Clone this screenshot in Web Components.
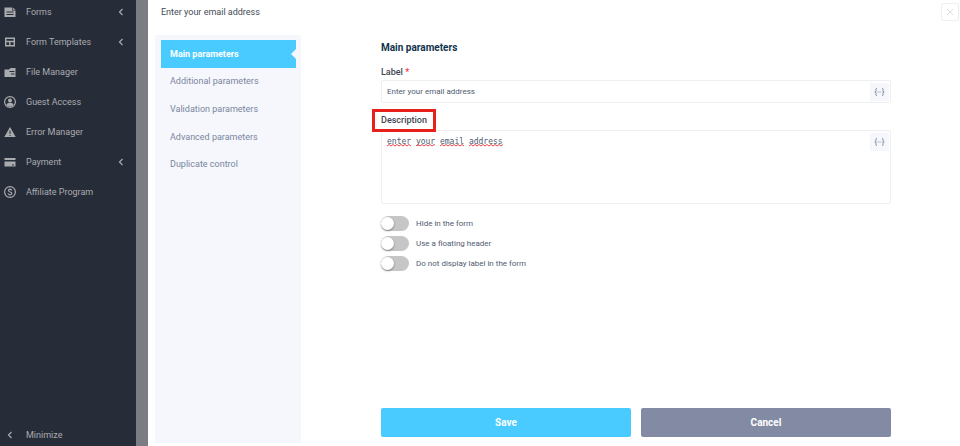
<!DOCTYPE html>
<html lang="en">
<head>
<meta charset="utf-8">
<meta name="viewport" content="width=device-width, initial-scale=1">
<title>Enter your email address</title>
<style>
    html, body{
        height: 100%;
        margin: 0;
    }
    body{
        font-family: Roboto, "Liberation Sans", sans-serif;
        font-size: 9px;
        background: white;
    }
</style>
</head>
<body>
<app-shell>
    <side-nav slot="nav">
        <nav-item icon="forms" more>Forms</nav-item>
        <nav-item icon="templates" more>Form Templates</nav-item>
        <nav-item icon="files">File Manager</nav-item>
        <nav-item icon="guest">Guest Access</nav-item>
        <nav-item icon="error">Error Manager</nav-item>
        <nav-item icon="payment" more>Payment</nav-item>
        <nav-item icon="affiliate">Affiliate Program</nav-item>
        <nav-item slot="bottom" icon="back">Minimize</nav-item>
    </side-nav>
    <settings-panel>
        <span slot="title">Enter your email address</span>
        <tab-list slot="tabs">
            <tab-item active>Main parameters</tab-item>
            <tab-item>Additional parameters</tab-item>
            <tab-item>Validation parameters</tab-item>
            <tab-item>Advanced parameters</tab-item>
            <tab-item>Duplicate control</tab-item>
        </tab-list>
        <span slot="heading">Main parameters</span>
        <text-field label="Label" value="Enter your email address" required></text-field>
        <text-field label="Description" value="enter your email address" multiline marked></text-field>
        <toggle-group>
            <toggle-switch>Hide in the form</toggle-switch>
            <toggle-switch>Use a floating header</toggle-switch>
            <toggle-switch>Do not display label in the form</toggle-switch>
        </toggle-group>
        <action-button slot="actions">Save</action-button>
        <action-button slot="actions" kind="secondary">Cancel</action-button>
    </settings-panel>
</app-shell>

<script>
const icons = {
    forms: `<path fill="currentColor" fill-rule="evenodd" d="M.5 1.500h7.500v3h3.500v6.500H.5zM2.500 5.500v1h7v-1zM2.500 8v1h7V8z"/><path fill="currentColor" d="M8.700 1.500l2.800 2.300H8.700z"/>`,
    templates: `<path fill="none" stroke="currentColor" stroke-width="1.400" d="M1.700 2.200h8.600v7.600H1.700zM1.700 5.500h8.600M5.800 5.500v4.300"/>`,
    files: `<path fill="currentColor" fill-rule="evenodd" d="M.5 3.500h4.500L6.500 2h5v9H.5zM5.500 5v1h5V5zM7 7.500v1h3.500v-1z"/>`,
    guest: `<circle cx="6" cy="6" r="5.400" fill="none" stroke="currentColor" stroke-width="1.200"/><circle cx="6" cy="4.500" r="2" fill="currentColor"/><path fill="currentColor" d="M2.400 9c.5-3 6.700-3 7.200 0C7.700 11.200 4.300 11.200 2.400 9z"/>`,
    error: `<path fill="currentColor" fill-rule="evenodd" d="M6 1l5.700 10H.3zM5.500 4.500v3.500h1V4.500zM5.500 9v1h1V9z"/>`,
    payment: `<path fill="currentColor" fill-rule="evenodd" d="M.5 2h11v2H.5zM.5 5.500h11V10.500H.5zM8 8.500v1h2v-1z"/>`,
    affiliate: `<circle cx="6" cy="6" r="5.400" fill="none" stroke="currentColor" stroke-width="1.200"/><path fill="none" stroke="currentColor" stroke-width="1.100" d="M7.900 4.500C7.500 3 4.300 3 4.300 4.600c0 1.700 3.600 1 3.600 2.800 0 1.700-3.500 1.700-3.900 0M6 2.300v1.300M6 8.500v1.300"/>`,
    back: `<path fill="none" stroke="currentColor" stroke-width="1.200" d="M7.500 3L4.500 6l3 3"/>`
}
const svg = (name) => `<svg width="12" height="12" viewBox="0 0 12 12" aria-hidden="true">${icons[name]}</svg>`

customElements.define("app-shell", class extends HTMLElement{
    constructor(){
        super()
        this.attachShadow({mode: "open"}).innerHTML = `
            <style>
            :host{
                display: flex;
                min-height: 100%;
                background: #7c7d82;
            }
            slot[name=nav]::slotted(*){
                flex: 0 0 136px;
                margin-right: 12px;
            }
            ::slotted(settings-panel){
                flex: 1;
                min-width: 0;
            }
            </style>
            <slot name="nav"></slot>
            <slot></slot>
            `
    }
})

customElements.define("side-nav", class extends HTMLElement{
    constructor(){
        super()
        this.attachShadow({mode: "open"}).innerHTML = `
            <style>
            :host{
                display: block;
                background: #272c39;
                color: #aaabae;
            }
            nav{
                display: flex;
                flex-direction: column;
                justify-content: space-between;
                height: 100%;
            }
            </style>
            <nav aria-label="Main menu">
                <div><slot></slot></div>
                <div><slot name="bottom"></slot></div>
            </nav>
            `
    }
})

customElements.define("nav-item", class extends HTMLElement{
    constructor(){
        super()
        const more = this.hasAttribute("more") ? `<span class="more">${svg("back")}</span>` : ""
        this.attachShadow({mode: "open"}).innerHTML = `
            <style>
            :host{
                display: block;
            }
            a{
                display: flex;
                align-items: center;
                gap: 10px;
                box-sizing: border-box;
                height: 30px;
                padding: 0 9px 7px 4px;
                color: inherit;
                text-decoration: none;
            }
            :host([slot=bottom]) a{
                height: 22px;
                padding-bottom: 0;
            }
            svg{
                display: block;
            }
            .text{
                flex: 1;
                white-space: nowrap;
            }
            </style>
            <a href="#">${svg(this.getAttribute("icon"))}<span class="text"><slot></slot></span>${more}</a>
            `
    }
})

customElements.define("settings-panel", class extends HTMLElement{
    constructor(){
        super()
        this.attachShadow({mode: "open"}).innerHTML = `
            <style>
            :host{
                display: flex;
                flex-direction: column;
                box-sizing: border-box;
                background: white;
                color: #4a5160;
            }
            header{
                display: flex;
                justify-content: space-between;
                align-items: center;
                height: 24px;
                padding: 0 1px 0 13px;
            }
            h1{
                margin: 0;
                font-size: 9px;
                font-weight: 400;
                color: #444a55;
            }
            .close{
                display: grid;
                place-items: center;
                width: 18px;
                height: 18px;
                padding: 0;
                border: 1px solid #f0f0f2;
                border-radius: 2px;
                background: white;
                color: #dcdddf;
            }
            .body{
                display: flex;
                flex: 1;
                padding: 11px 0 3px 7px;
            }
            slot[name=tabs]::slotted(*){
                flex: 0 0 146px;
            }
            .main{
                display: flex;
                flex: 1;
                flex-direction: column;
                min-width: 0;
                padding: 6px 69px 6px 80px;
            }
            h2{
                margin: 0 0 10px;
                font-size: 10px;
                line-height: 14px;
                font-weight: 700;
                color: #10344d;
            }
            .actions{
                display: grid;
                grid-template-columns: 1fr 1fr;
                gap: 10px;
                margin-top: auto;
            }
            </style>
            <header>
                <h1><slot name="title"></slot></h1>
                <button class="close" type="button" aria-label="Close">
                    <svg width="8" height="8" viewBox="0 0 8 8"><path d="M1 1l6 6M7 1L1 7" stroke="currentColor" fill="none"/></svg>
                </button>
            </header>
            <div class="body">
                <slot name="tabs"></slot>
                <div class="main">
                    <h2><slot name="heading"></slot></h2>
                    <slot></slot>
                    <div class="actions"><slot name="actions"></slot></div>
                </div>
            </div>
            `
    }
})

customElements.define("tab-list", class extends HTMLElement{
    constructor(){
        super()
        this.attachShadow({mode: "open"}).innerHTML = `
            <style>
            :host{
                display: block;
                box-sizing: border-box;
                padding: 5px 5px 5px 6px;
                border-radius: 2px;
                background: #f5f7fc;
            }
            .list{
                display: grid;
                grid-auto-rows: 1fr;
                height: 138px;
            }
            </style>
            <div class="list" role="tablist"><slot></slot></div>
            `
    }
})

customElements.define("tab-item", class extends HTMLElement{
    constructor(){
        super()
        this.attachShadow({mode: "open"}).innerHTML = `
            <style>
            :host{
                display: block;
            }
            button{
                position: relative;
                width: 100%;
                height: 100%;
                padding: 0 9px;
                border: 0;
                background: none;
                color: #7a869d;
                font: inherit;
                text-align: left;
            }
            :host([active]) button{
                background: #49cbff;
                color: white;
                font-weight: 700;
            }
            :host([active]) button::after{
                content: "";
                position: absolute;
                right: 0;
                top: calc(50% - 5px);
                border: 5px solid transparent;
                border-left: 0;
                border-right-color: #f5f7fc;
            }
            </style>
            <button type="button" role="tab" aria-selected="${this.hasAttribute("active")}"><slot></slot></button>
            `
    }
})

customElements.define("text-field", class extends HTMLElement{
    constructor(){
        super()
        const label = this.getAttribute("label")
        const value = this.getAttribute("value")
        const multiline = this.hasAttribute("multiline")
        const star = this.hasAttribute("required") ? ` <span class="star">*</span>` : ""
        const control = multiline
            ? `<textarea id="control" spellcheck="false">${value}</textarea><div class="squiggles">${this.squiggles(value)}</div>`
            : `<input id="control" type="text" value="${value}">`
        this.attachShadow({mode: "open"}).innerHTML = `
            <style>
            :host{
                display: block;
            }
            :host([marked]){
                margin-top: 6px;
            }
            .label{
                display: flex;
                height: 15px;
            }
            :host([marked]) .label{
                height: 21px;
            }
            label{
                line-height: 15px;
                font-weight: 500;
                color: #3f4650;
            }
            .star{
                color: #f33;
            }
            :host([marked]) label{
                position: relative;
                z-index: 1;
                box-sizing: border-box;
                height: 23px;
                margin-left: -9px;
                padding: 1px 6px;
                border: 3px solid #e8201b;
                background: white;
            }
            .box{
                position: relative;
                display: flex;
                align-items: flex-start;
                box-sizing: border-box;
                padding: 2px 1px 1px 5px;
                border: 1px solid #eeeff3;
                border-radius: 2px;
            }
            input, textarea{
                flex: 1;
                min-width: 0;
                box-sizing: border-box;
                height: 18px;
                margin: 0;
                padding: 0;
                border: 0;
                outline: 0;
                resize: none;
                background: none;
                color: #4f5b71;
                font: 8px/18px Roboto, "Liberation Sans", sans-serif;
            }
            textarea{
                height: 69px;
                overflow: hidden;
                font: 8px/18px "DejaVu Sans Mono", "Liberation Mono", monospace;
            }
            .squiggles{
                position: absolute;
                left: 5px;
                top: 13px;
                font: 8px/18px "DejaVu Sans Mono", "Liberation Mono", monospace;
                display: flex;
                gap: 1ch;
                pointer-events: none;
            }
            .squiggles svg{
                display: block;
                height: 3px;
            }
            .insert{
                display: grid;
                place-items: center;
                width: 19px;
                height: 18px;
                padding: 0;
                border: 0;
                border-radius: 1px;
                background: #f5f7fc;
                color: #7e8796;
            }
            </style>
            <div class="label"><label for="control">${label}${star}</label></div>
            <div class="box">
                ${control}
                <button class="insert" type="button" aria-label="Insert variable">
                    <svg width="11" height="8" viewBox="0 0 11 8" fill="none" stroke="currentColor"><path d="M3 .5C1.500.5 2 1.500 2 2.500S1.800 4 .8 4C1.800 4 2 4.500 2 5.500s-.5 2 1 2M8 .5c1.500 0 1 1 1 2S9.200 4 10.200 4C9.200 4 9 4.500 9 5.500s.5 2-1 2"/><path stroke-opacity=".5" d="M3.500 4h4"/></svg>
                </button>
            </div>
            `
    }

    // one wavy line per word, sized in ch so it follows the monospaced text
    squiggles(text){
        let wave = "M0 2"
        for(let x = 0; x < 200; x += 4){
            wave += "l2 -1.500l2 1.500"
        }
        return text.split(" ").map((word) => `<svg style="width: ${word.length}ch" aria-hidden="true"><path d="${wave}" fill="none" stroke="#e5484d"/></svg>`).join("")
    }
})

customElements.define("toggle-group", class extends HTMLElement{
    constructor(){
        super()
        this.attachShadow({mode: "open"}).innerHTML = `
            <style>
            :host{
                display: flex;
                flex-direction: column;
                align-items: flex-start;
                gap: 5px;
                margin: 12px 0;
            }
            </style>
            <slot></slot>
            `
    }
})

customElements.define("toggle-switch", class extends HTMLElement{
    constructor(){
        super()
        this.attachShadow({mode: "open"}).innerHTML = `
            <style>
            :host{
                display: block;
            }
            label{
                display: flex;
                align-items: center;
                gap: 7px;
                color: #4f5b71;
                font-size: 8px;
                line-height: 15px;
            }
            input{
                appearance: none;
                display: flex;
                align-items: center;
                width: 28px;
                height: 15px;
                margin: 0;
                border-radius: 8px;
                background: #c6c6c8;
            }
            input::before{
                content: "";
                width: 13px;
                height: 13px;
                border-radius: 50%;
                background: white;
                box-shadow: 0 1px 2px #0006;
            }
            input:checked{
                justify-content: flex-end;
                background: #49cbff;
            }
            </style>
            <label><input type="checkbox" role="switch"><span><slot></slot></span></label>
            `
    }
})

customElements.define("action-button", class extends HTMLElement{
    constructor(){
        super()
        this.attachShadow({mode: "open"}).innerHTML = `
            <style>
            :host{
                display: block;
            }
            button{
                width: 100%;
                height: 29px;
                padding: 0;
                border: 0;
                border-radius: 2px;
                background: #49cbff;
                color: white;
                font: inherit;
                font-size: 10px;
                font-weight: 700;
            }
            :host([kind=secondary]) button{
                background: #828ba3;
            }
            </style>
            <button type="button"><slot></slot></button>
            `
    }
})
</script>
</body>
</html>
